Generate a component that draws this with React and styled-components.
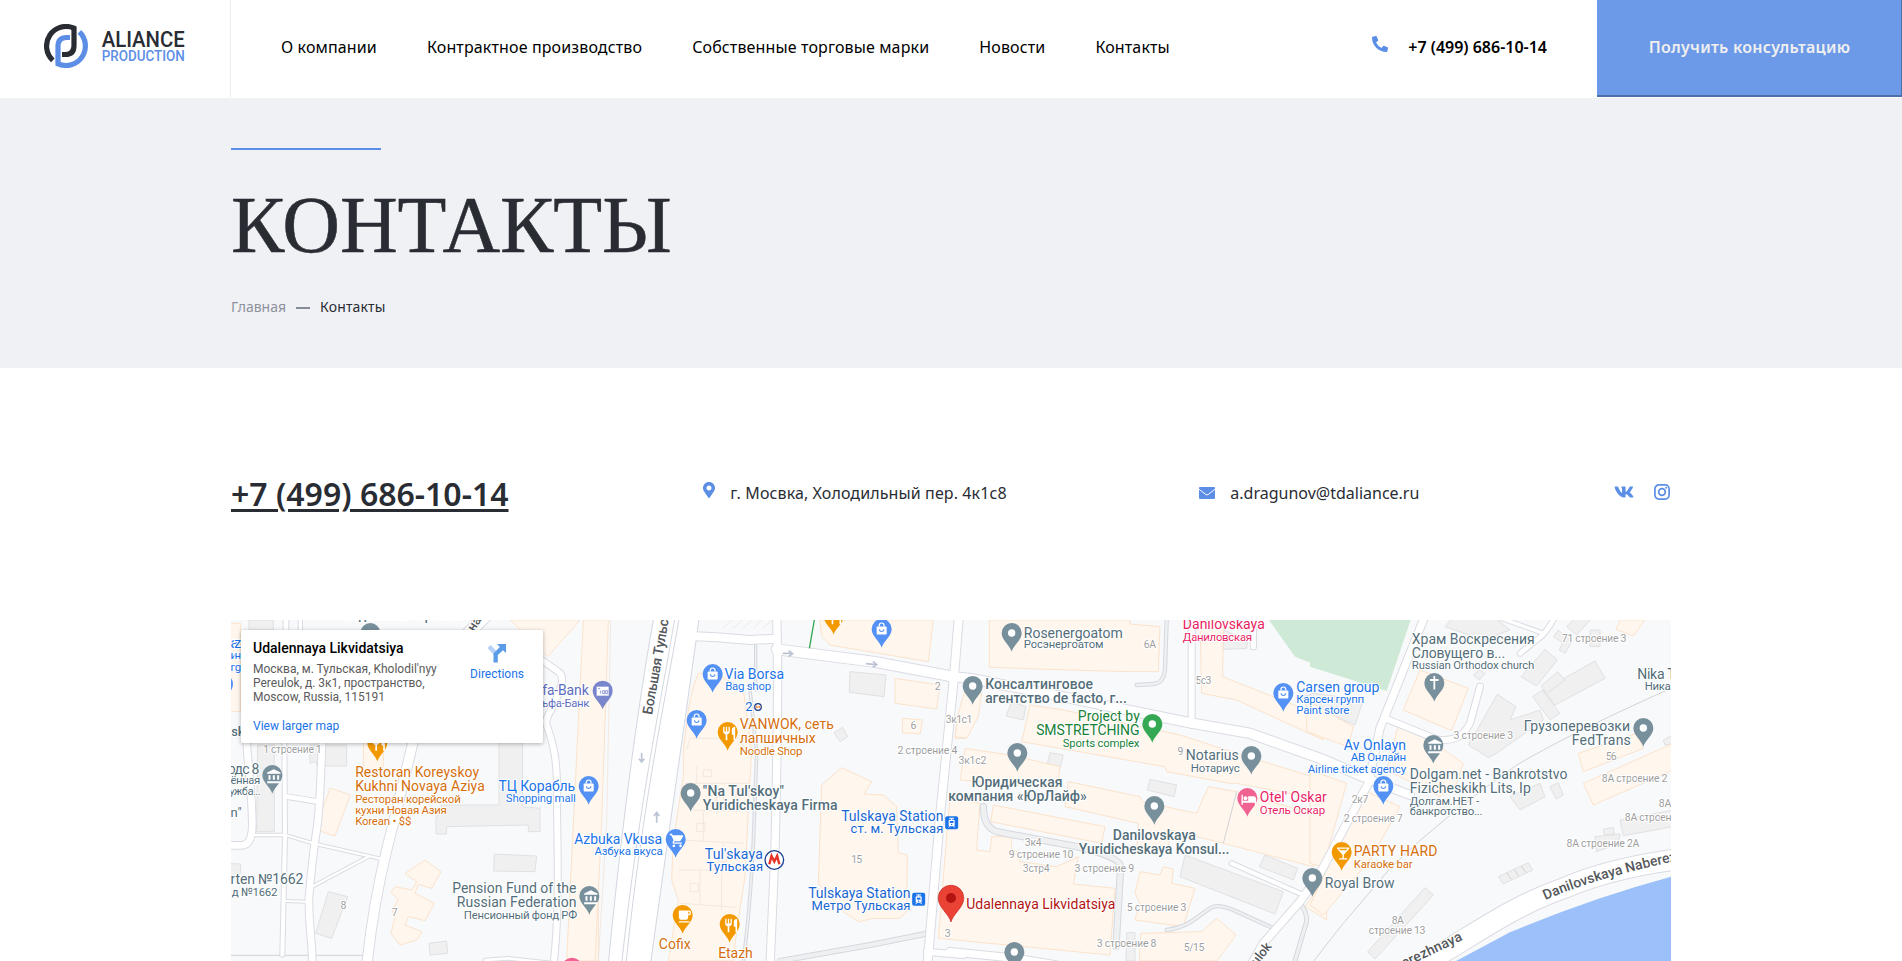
import React from "react";
import styled, { createGlobalStyle } from "styled-components";
import { FaPhoneAlt, FaMapMarkerAlt, FaVk } from "react-icons/fa";
import {
  MdRestaurant,
  MdAccountBalance,
  MdShoppingCart,
  MdLocalCafe,
  MdHotel,
  MdLocalBar,
} from "react-icons/md";

const GlobalStyle = createGlobalStyle`
  * { box-sizing: border-box; }
  body {
    margin: 0;
    background: #fff;
    color: #292c33;
    font-family: "Noto Sans", sans-serif;
    font-size: 16px;
  }
  a { color: inherit; text-decoration: none; }
  svg { display: block; }
`;

const blue = "#5c8ee6";

/* ---------- header ---------- */

const Header = styled.header`
  display: flex;
  height: 98px;
  padding-bottom: 1px;
  background: #fff;
`;

const LogoCell = styled.a`
  display: flex;
  width: 231px;
  padding: 24px 0 0 44px;
  border-right: 1px solid #ededf0;
`;

const Nav = styled.nav`
  display: flex;
  flex: 1;
  gap: 50px;
  padding: 36px 0 0 50px;
  line-height: 22px;
  letter-spacing: 0.135px;
  color: #000;
  white-space: nowrap;
`;

const HeaderPhone = styled.a`
  display: flex;
  gap: 20px;
  padding: 36px 50px 0 0;
  line-height: 22px;
  font-weight: 600;
  color: #000;

  svg { color: ${blue}; }
`;

const ConsultButton = styled.button`
  width: 305px;
  height: 97px;
  padding: 0 0 2px 1px;
  border: 0 solid #4d70a8;
  border-width: 0 1px 2px 0;
  background: #6d9ae8;
  color: #f0eff0;
  font: 600 16px "Noto Sans", sans-serif;
  letter-spacing: 0.27px;
`;

const LogoText = styled.text`
  font-family: Roboto, sans-serif;
  font-weight: 500;
  font-size: ${(p) => p.$size}px;
  fill: ${(p) => p.$fill};
`;

function Logo() {
  return (
    <svg width="146" height="46" viewBox="0 0 146 46">
      <g fill="none" strokeWidth="5.2">
        <path d="M8.8 36.3A19.5 19.5 0 0 1 30 4.2V21.5Q30 30.5 21.5 30.5H18" stroke="#292c33" />
        <path d="M35.4 7.9A19.5 19.5 0 0 1 14 39.8V22.5Q14 13.5 22.5 13.5H26" stroke={blue} />
      </g>
      <LogoText $size={22.5} $fill="#292c33" x="57.7" y="23" textLength="83" lengthAdjust="spacingAndGlyphs">
        ALIANCE
      </LogoText>
      <LogoText $size={15.5} $fill={blue} x="57.7" y="37" textLength="83" lengthAdjust="spacingAndGlyphs">
        PRODUCTION
      </LogoText>
    </svg>
  );
}

/* ---------- title band ---------- */

const Hero = styled.section`
  height: 270px;
  padding: 50px 231px 0;
  background: #f0f1f5;
`;

const Accent = styled.div`
  width: 150px;
  height: 2px;
  background: ${blue};
`;

const Title = styled.h1`
  margin: 29px 0 0;
  font: 400 80px/92px "Liberation Serif", serif;
  letter-spacing: -0.1px;
  -webkit-text-stroke: 0.5px #292c33;
  color: #292c33;
`;

const Breadcrumbs = styled.div`
  display: flex;
  align-items: center;
  gap: 10px;
  margin-top: 26px;
  font-size: 14px;
  line-height: 20px;
`;

const Crumb = styled.span`
  color: ${(p) => (p.$current ? "#292c33" : "#8d919c")};
  letter-spacing: ${(p) => (p.$current ? "0.15px" : "0")};
`;

const CrumbDash = styled.span`
  width: 14px;
  height: 2px;
  margin-top: 1px;
  background: #858b99;
`;

/* ---------- contacts ---------- */

const Content = styled.main`
  width: 1440px;
  margin: 0 auto;
  padding-top: 103px;
`;

const ContactRow = styled.div`
  display: flex;
  justify-content: space-between;
  height: 149px;
`;

const BigPhone = styled.a`
  padding-top: 1px;
  font-size: 32px;
  line-height: 44px;
  font-weight: 600;
  text-decoration: underline;
  text-decoration-thickness: 3px;
  text-underline-offset: 3px;
`;

const Contact = styled.a`
  display: flex;
  gap: ${(p) => p.$gap}px;
  padding-top: 11px;
  line-height: 22px;
  letter-spacing: ${(p) => p.$tracking || 0}px;
  svg {
    margin-top: ${(p) => p.$drop}px;
    color: ${blue};
  }
`;

const Socials = styled.div`
  display: flex;
  align-items: center;
  gap: 20px;
  height: 42px;
  padding: 0 1px 0 2px;
  color: ${blue};
`;

function Envelope() {
  return (
    <svg width="16" height="12" viewBox="0 0 16 12">
      <rect width="16" height="12" rx="1" fill={blue} />
      <path d="M0 2.2 L6.8 7.5 Q8 8.3 9.2 7.5 L16 2.2" fill="none" stroke="#fff" strokeWidth="1" />
    </svg>
  );
}

function Instagram() {
  return (
    <svg width="16" height="16" viewBox="0 0 16 16" fill="none" stroke={blue} strokeWidth="1.7">
      <rect x="0.9" y="0.9" width="14.2" height="14.2" rx="4" />
      <circle cx="8" cy="8" r="3.3" />
      <circle cx="12.2" cy="3.8" r="1" fill={blue} stroke="none" />
    </svg>
  );
}

/* ---------- map ---------- */

const MapFrame = styled.div`
  position: relative;
  height: 341px;
  overflow: hidden;
`;

const MapCard = styled.div`
  position: absolute;
  left: 10px;
  top: 10px;
  display: flex;
  justify-content: space-between;
  width: 302px;
  height: 113px;
  padding: 9px 19px 0 12px;
  border-radius: 2px;
  background: #fff;
  box-shadow: 0 1px 4px rgba(0, 0, 0, 0.3);
  font: 12px/14px Roboto, sans-serif;
  color: #5b5b5b;
  white-space: pre-line;
`;

const PlaceName = styled.div`
  margin-bottom: 5px;
  font-size: 14px;
  line-height: 18px;
  font-weight: 500;
  color: #000;
`;

const MapLink = styled.a`
  display: block;
  margin-top: ${(p) => p.$top}px;
  color: #1a73e8;
`;

const Directions = styled.div`
  display: flex;
  flex-direction: column;
  align-items: center;
  padding-top: 5px;

  svg { margin-right: 2px; }
`;

const MapText = styled.text`
  font-family: Roboto, sans-serif;
  font-size: ${(p) => p.$size}px;
  font-weight: ${(p) => p.$weight};
  fill: ${(p) => p.$fill};
  stroke: #fff;
  stroke-width: 2px;
  stroke-linejoin: round;
  paint-order: stroke;
`;

const slate = "#546e7a";
const poiBlue = "#1a73e8";
const transit = "#1967d2";
const orange = "#d56e0c";
const green = "#188038";
const pink = "#e91e63";
const gray = "#9e9e9e";

// Each sheet is drawn on a grid three times finer than the map, starting at x.
const SHEETS = [
  {
    x: 225,
    cream: [
      "856,30 968,140 1065,30",
      "1078,30 1120,30 1120,1053 1030,1053",
      "316,534 376,555 330,678 270,658",
      "415,395 475,395 475,470 415,490",
      "600,750 648,785 620,835 580,823 570,850 628,880 600,932 550,920 540,945 592,965 575,990 525,1005 498,970 510,920 500,900 520,870 498,845 510,830 560,840 575,815 540,790",
      "0,40 47,40 47,305 0,305",
    ],
    grey: [
      "98,405 148,405 148,665 95,665",
      "255,405 365,405 365,468 275,468 275,455 255,460",
      "822,390 893,390 893,590 945,595 945,665 910,665 910,645 665,650 665,672 633,672 633,625 650,585 822,585",
      "808,732 935,738 930,785 806,783",
      "310,845 368,860 320,985 272,970",
      "612,1000 665,993 668,1030 615,1035",
      "0,760 47,762 47,790 0,830",
      "72,30 145,30 145,60 72,60",
    ],
    roads: [
      [14, "M183,0V60"],
      [10, "M226,0V60"],
      [20, "M65,380C65,450 80,520 82,640Q82,705 50,706H0"],
      [12, "M178,380L180,680L172,1034"],
      [20, "M292,380C285,550 285,600 275,660C262,740 258,800 252,860C250,930 260,980 262,1053"],
      [28, "M568,380L515,600L485,720Q445,880 425,1070"],
      [7, "M90,675L180,675L265,700L475,748"],
      [14, "M188,560L280,575"],
      [7, "M258,832L430,740"],
      [6, "M180,873L245,875"],
      [34, "M800,0L730,70"],
      [18, "M950,150L1000,185Q1015,195 1010,220C990,300 955,320 965,345C985,400 1000,450 996,600C1000,800 1000,950 985,1070"],
      [8, "M780,1050L850,1045L985,1060"],
    ],
    paths: [],
    lines: ["M0,1036H415"],
  },
  {
    x: 590,
    cream: [
      "-20,30 55,30 35,640 15,1053 -70,1053",
      "325,190 380,190 460,240 485,420 475,600 465,800 440,960 430,1053 235,1053 265,870 245,810 250,690 280,500 280,420 295,300 310,230",
      "695,525 755,473 845,515 822,552 880,555 920,590 925,728 952,735 950,905 930,925 850,925 805,935 760,905 685,820",
      "690,30 1030,30 1015,155 720,105 695,80",
      "915,205 1050,225 1040,297 915,280",
      "937,325 998,330 990,372 937,368",
      "1100,335 1125,335 1125,385 1095,385",
    ],
    grey: [
      "780,185 888,195 882,260 778,247",
      "732,368 758,352 773,380 750,395",
      "360,410 380,410 378,450 358,450",
      "330,900 350,903 350,945 330,948",
    ],
    roads: [
      [24, "M300,78L380,82L480,90L560,86"],
      [22, "M560,0L562,130C565,300 560,500 555,720L540,1070"],
      [30, "M560,118L850,155L1090,200"],
      [24, "M1108,0L1092,200L1050,620L1012,1070"],
      [18, "M1010,1025L1120,1035"],
    ],
    paths: [
      [5, "M480,240L500,430L490,700Q480,900 460,1053"],
      [4, "M497,105V240"],
      [12, "M570,1053L840,1005L1005,972"],
    ],
    lines: [
      "M62,30L50,640L25,1053",
      "M400,55l25,-25M430,55l25,-25M460,55l25,-25M490,55l25,-25M520,55l25,-25",
      "M290,420l10,-35h150l15,40M285,520h190M300,600l150,4M270,690l190,10M265,780h190M320,470v50M380,520v90M340,605v90M400,700v80M330,780v100M395,790v110M270,880l170,12",
      "M340,480h25v20h-25zM375,560h25v25h-25zM320,640h25v25h-25zM385,730h25v25h-25zM300,820h25v25h-25z",
    ],
  },
  {
    x: 950,
    cream: [
      "118,30 540,30 540,42 630,50 625,185 530,185 360,180 205,175 118,172",
      "750,30 820,30 818,200 1120,320 1120,390 860,270 755,250",
      "240,285 340,300 690,375 860,430 1120,510 1120,570 860,520 840,520 650,485 645,470 215,395",
      "355,515 570,560 575,575 740,610 775,530 860,545 1120,620 1090,770 820,700 660,660 655,730 560,720 565,640 345,590",
      "45,415 180,435 330,470 322,535 30,510",
      "130,585 465,650 455,700 122,635",
      "45,240 95,250 85,320 50,385 15,380 25,310",
      "0,560 90,580 80,720 120,725 125,680 185,680 185,720 210,725 210,755 320,770 385,740 370,822 495,835 480,1035 -35,985",
      "640,770 670,778 665,820 735,835 700,950 555,930 570,880 555,850 570,785 630,795",
      "572,970 755,965 800,925 858,975 800,1053 568,1053",
      "1065,890 1100,840 1130,870 1130,930",
    ],
    grey: [
      "185,275 228,290 220,330 168,318",
      "300,428 340,435 330,475 292,462",
      "600,508 680,525 672,560 592,540",
      "705,735 1000,845 975,912 690,800",
      "945,735 1043,775 1030,810 928,770",
      "530,968 555,968 555,1053 528,1053",
      "820,60 893,90 890,115 820,118",
    ],
    park: "957,30 1125,30 1125,175 1035,140",
    roads: [
      [18, "M725,0V345"],
      [28, "M0,200L60,205L240,240L640,322L730,340L900,370L1110,445L1240,500"],
      [12, "M845,760L1060,855"],
      [16, "M910,60V110"],
      [22, "M0,1025L200,1045L320,1065"],
    ],
    paths: [
      [7, "M650,30L645,180Q640,220 610,222L560,225"],
      [16, "M100,590Q100,650 140,665L380,710Q510,740 512,770L498,1010"],
      [7, "M650,960C720,950 740,920 780,895Q800,880 850,900L970,955"],
      [9, "M1050,880Q1080,920 1065,950L1030,1070"],
    ],
    lines: ["M860,545L820,700"],
  },
  {
    x: 1310,
    cream: [
      "330,180 475,235 425,362 280,300",
      "265,345 325,370 345,380 460,460 440,520 390,560 230,480",
      "-10,270 130,350 115,410 -10,365",
      "0,480 110,520 40,770 0,760",
      "160,540 270,590 180,750 95,850 40,915 0,885 40,800",
      "805,430 980,370 1000,415 820,485",
      "820,520 1090,400 1090,480 850,585",
      "930,30 1005,30 970,78 918,58",
    ],
    grey: [
      "-20,260 10,250 160,270 135,345 100,330 0,290",
      "405,50 430,20 550,20 600,60 520,90",
      "705,118 742,150 680,228 633,200",
      "855,153 885,205 735,285 700,240",
      "743,185 765,210 710,250 693,228",
      "562,253 618,290 600,330 690,300 700,330 560,430 535,443 475,405",
      "600,560 690,520 705,560 630,600",
      "345,833 370,855 195,1047 173,1025",
      "930,630 1090,600 1090,650 940,677",
      "855,680 930,672 925,700 860,725",
      "770,50 800,20 850,20 800,75",
      "565,800 655,758 668,780 580,822",
      "697,240 668,260 720,330 750,310",
      "720,530 745,518 760,555 738,567",
      "880,658 910,652 913,672 883,675",
      "730,80 745,60 785,95 765,130 748,120 758,98",
      "490,195 508,180 525,190 508,210",
      "840,60 870,60 870,110 840,110",
      "1060,390 1090,375 1090,400 1065,405",
    ],
    park: "0,30 302,30 230,243 0,170",
    roads: [
      [22, "M352,0L210,355L175,520L30,790L-30,875L-140,1000L-180,1070"],
      [18, "M225,325L380,388Q450,400 480,340L510,230"],
      [14, "M630,130L680,90Q710,70 735,20"],
      [10, "M560,20L700,70"],
      [24, "M170,505L300,555"],
      [60, "M300,1085C480,985 600,890 760,835Q900,775 1100,748"],
    ],
    paths: [],
    lines: [
      "M0,1070Q20,1040 100,940L245,770Q400,620 620,465Q800,360 1090,232",
      "M590,788l14,20M612,778l14,20M634,768l14,20",
    ],
  },
];

const LABELS = [
  // [sheet, text, x, baseline, width, colour, size, weight]
  [0, "az", 18, 115, 30, poiBlue, 14],
  [0, "ин", 18, 148, 30, poiBlue, 11.5],
  [0, "ng", 18, 184, 30, poiBlue, 11.5],
  [0, "sk", 20, 377, 38, slate, 13, 500],
  [0, "fa-Bank", 953, 256, 138, "#5c6bc0", 14],
  [0, "ьфа-Банк", 953, 290, 140, "#5c6bc0", 11.5],
  [0, "1 строение 1", 116, 430, 174, gray, 10.5],
  [0, "одс 8", 10, 491, 93, slate, 14],
  [0, "ённая", 18, 523, 88, slate, 11.5],
  [0, "ужба...", 14, 556, 92, slate, 11.5],
  [0, 'n"', 18, 620, 32, slate, 13],
  [0, "Restoran Koreyskoy", 392, 501, 370, orange, 14],
  [0, "Kukhni Novaya Aziya", 392, 543, 387, orange, 14],
  [0, "Ресторан корейской", 392, 579, 315, orange, 11.5],
  [0, "кухни Новая Азия", 392, 611, 273, orange, 11.5],
  [0, "Korean • $$", 392, 644, 167, orange, 11.5],
  [0, "ТЦ Корабль", 822, 543, 228, poiBlue, 14],
  [0, "Shopping mall", 844, 576, 208, poiBlue, 11.5],
  [0, "rten №1662", 18, 822, 217, slate, 14],
  [0, "д №1662", 22, 857, 135, slate, 11.5],
  [0, "8", 348, 898, 16, gray, 10.5],
  [0, "7", 502, 918, 15, gray, 10.5],
  [0, "Pension Fund of the", 683, 849, 371, slate, 14],
  [0, "Russian Federation", 697, 891, 357, slate, 14],
  [0, "Пенсионный фонд РФ", 718, 926, 338, slate, 11.5],
  [1, "Azbuka Vkusa", -46, 701, 262, poiBlue, 14],
  [1, "Азбука вкуса", 15, 735, 203, poiBlue, 11.5],
  [1, "Via Borsa", 405, 206, 177, poiBlue, 14],
  [1, "Bag shop", 407, 239, 136, poiBlue, 11.5],
  [1, "2", 467, 303, 20, transit, 13],
  [1, "VANWOK, сеть", 451, 357, 280, orange, 14],
  [1, "лапшичных", 451, 399, 226, orange, 14],
  [1, "Noodle Shop", 451, 434, 186, orange, 11.5],
  [1, "\"Na Tul'skoy\"", 340, 558, 242, slate, 14, 500],
  [1, "Yuridicheskaya Firma", 340, 600, 402, slate, 14, 500],
  [1, "Tul'skaya", 346, 747, 172, transit, 14],
  [1, "Тульская", 351, 783, 168, transit, 13],
  [1, "Tulskaya Station", 755, 632, 305, transit, 14],
  [1, "ст. м. Тульская", 783, 669, 277, transit, 13],
  [1, "Tulskaya Station", 656, 863, 305, transit, 14],
  [1, "Метро Тульская", 666, 900, 295, transit, 13],
  [1, "Cofix", 208, 1016, 94, orange, 14],
  [1, "Etazh", 386, 1043, 102, orange, 14],
  [1, "2", 1036, 240, 15, gray, 10.5],
  [1, "6", 963, 357, 15, gray, 10.5],
  [1, "3к1с1", 1069, 339, 78, gray, 10.5],
  [1, "2 строение 4", 924, 433, 178, gray, 10.5],
  [1, "15", 785, 759, 31, gray, 10.5],
  [1, "3", 1066, 980, 15, gray, 10.5],
  [2, "Rosenergoatom", 223, 84, 295, slate, 14],
  [2, "Росэнергоатом", 223, 115, 237, slate, 11.5],
  [2, "6A", 583, 114, 35, gray, 10.5],
  [2, "Danilovskaya", 700, 57, 244, pink, 14],
  [2, "Даниловская", 700, 92, 206, pink, 11.5],
  [2, "5с3", 738, 222, 46, gray, 10.5],
  [2, "Консалтинговое", 107, 236, 322, slate, 14, 500],
  [2, "агентство de facto, г...", 107, 278, 423, slate, 14, 500],
  [2, "Project by", 385, 333, 184, green, 14],
  [2, "SMSTRETCHING", 260, 375, 308, green, 14],
  [2, "Sports complex", 340, 410, 228, green, 11.5],
  [2, "9", 684, 436, 16, gray, 10.5],
  [2, "Notarius", 709, 449, 157, slate, 14],
  [2, "Нотариус", 724, 485, 145, slate, 11.5],
  [2, "3к1с2", 27, 463, 82, gray, 10.5],
  [2, "Юридическая", 66, 531, 271, slate, 14, 500],
  [2, "компания «ЮрЛайф»", -4, 573, 414, slate, 14, 500],
  [2, "Danilovskaya", 490, 690, 247, slate, 14, 500],
  [2, "Yuridicheskaya Konsul...", 388, 732, 450, slate, 14, 500],
  [2, "Otel' Oskar", 931, 576, 199, pink, 14],
  [2, "Отель Оскар", 931, 611, 194, pink, 11.5],
  [2, "3к4", 226, 708, 49, gray, 10.5],
  [2, "9 строение 10", 178, 745, 192, gray, 10.5],
  [2, "3стр4", 220, 787, 79, gray, 10.5],
  [2, "3 строение 9", 375, 787, 177, gray, 10.5],
  [2, "Udalennaya Likvidatsiya", 50, 897, 446, "#b31412", 14],
  [2, "5 строение 3", 532, 903, 177, gray, 10.5],
  [2, "3 строение 8", 442, 1011, 177, gray, 10.5],
  [2, "5/15", 703, 1023, 60, gray, 10.5],
  [2, "Carsen group", 1040, 245, 248, poiBlue, 14],
  [2, "Карсен групп", 1040, 280, 202, poiBlue, 11.5],
  [2, "Paint store", 1040, 313, 158, poiBlue, 11.5],
  [3, "Храм Воскресения", 307, 102, 367, slate, 14],
  [3, "Словущего в...", 307, 144, 278, slate, 14],
  [3, "Russian Orthodox church", 307, 176, 366, slate, 11.5],
  [3, "71 строение 3", 757, 97, 192, gray, 10.5],
  [3, "Nika Trans", 983, 206, 190, slate, 14],
  [3, "Ника Транс", 1006, 240, 170, slate, 11.5],
  [3, "3 строение 3", 432, 388, 177, gray, 10.5],
  [3, "Грузоперевозки", 643, 363, 317, slate, 14],
  [3, "FedTrans", 787, 405, 175, slate, 14],
  [3, "56", 889, 450, 31, gray, 10.5],
  [3, "8А строение 2", 877, 517, 195, gray, 10.5],
  [3, "8А", 1048, 591, 36, gray, 10.5],
  [3, "8А строение 3", 946, 634, 195, gray, 10.5],
  [3, "8А строение 2А", 771, 711, 217, gray, 10.5],
  [3, "Av Onlayn", 103, 420, 185, poiBlue, 14],
  [3, "АВ Онлайн", 124, 454, 164, poiBlue, 11.5],
  [3, "Airline ticket agency", -5, 488, 293, poiBlue, 11.5],
  [3, "Dolgam.net - Bankrotstvo", 301, 507, 471, slate, 14],
  [3, "Fizicheskikh Lits, Ip", 301, 549, 361, slate, 14],
  [3, "Долгам.НЕТ -", 301, 584, 206, slate, 11.5],
  [3, "банкротство...", 301, 616, 216, slate, 11.5],
  [3, "2к7", 127, 579, 48, gray, 10.5],
  [3, "2 строение 7", 103, 637, 175, gray, 10.5],
  [3, "PARTY HARD", 133, 737, 249, orange, 14],
  [3, "Karaoke bar", 133, 773, 175, orange, 11.5],
  [3, "Royal Brow", 46, 833, 207, slate, 14],
  [3, "8А", 247, 943, 34, gray, 10.5],
  [3, "строение 13", 178, 972, 168, gray, 10.5],
];

const PINS = [
  // [sheet, x, y, colour, icon]
  [0, 436, 69, "#78909c"],
  [0, 457, 398, "#f29900", MdRestaurant],
  [0, 142, 495, "#78909c", MdAccountBalance],
  [0, -6, 222, "#5491f5"],
  [0, 1091, 528, "#5491f5", "bag"],
  [0, 1093, 858, "#78909c", MdAccountBalance],
  [0, 1041, 1073, "#f06292"],
  [1, 38, 242, "#7986cb", "note"],
  [1, 368, 192, "#5491f5", "bag"],
  [1, 320, 330, "#5491f5", "bag"],
  [1, 413, 366, "#f29900", MdRestaurant],
  [1, 302, 549, "#78909c", "dot"],
  [1, 257, 687, "#5491f5", MdShoppingCart],
  [1, 278, 915, "#f29900", MdLocalCafe],
  [1, 419, 942, "#f29900", MdRestaurant],
  [1, 731, 18, "#f29900", MdRestaurant],
  [1, 875, 57, "#5491f5", "bag"],
  [2, 185, 69, "#78909c", "dot"],
  [2, 68, 228, "#78909c", "dot"],
  [2, 607, 342, "#34a853", "dot"],
  [2, 202, 429, "#78909c", "dot"],
  [2, 904, 438, "#78909c", "dot"],
  [2, 613, 588, "#78909c", "dot"],
  [2, 892, 564, "#f06292", MdHotel],
  [2, 1000, 249, "#5491f5", "bag"],
  [2, 1087, 804, "#78909c", "dot"],
  [2, 193, 1026, "#78909c", "dot"],
  [3, 373, 219, "#78909c", "cross"],
  [3, 370, 405, "#78909c", MdAccountBalance],
  [3, 220, 528, "#5491f5", "bag"],
  [3, 95, 726, "#f29900", MdLocalBar],
  [3, 1000, 354, "#78909c", "dot"],
];

const px = (sheet, x) => SHEETS[sheet].x + x / 3;
const py = (y) => 610 + y / 3;
const PIN_SHAPE = "M0,18.7C-1.5,12.5 -10,7.5 -10,0A10,10 0 1 1 10,0C10,7.5 1.5,12.5 0,18.7Z";

function Pin({ sheet, x, y, fill, icon: Icon }) {
  return (
    <g transform={`translate(${px(sheet, x)} ${py(y)})`}>
      <path d={PIN_SHAPE} fill={fill} />
      {Icon === "dot" && <circle r="3.7" fill="#fff" />}
      {Icon === "cross" && <path d="M0,-7V6.5M-4.3,-3H4.3" stroke="#fff" strokeWidth="1.8" />}
      {Icon === "bag" && (
        <g>
          <rect x="-5" y="-2.5" width="10" height="8" rx="0.8" fill="#fff" />
          <path d="M-2.4,-2.5V-3.6A2.4,2.4 0 0 1 2.4,-3.6V-2.5" fill="none" stroke="#fff" strokeWidth="1.2" />
          <path d="M-2.2,0.3A2.2,2.2 0 0 0 2.2,0.3" fill="none" stroke={fill} strokeWidth="1.1" />
        </g>
      )}
      {Icon === "note" && (
        <g>
          <rect x="-6" y="-4" width="12" height="9" fill="#fff" />
          <path d="M-4.5,-2h2M-2,0v3M0,0h2v3h-2zM3,0h2v3h-2z" stroke={fill} fill="none" strokeWidth="0.8" />
        </g>
      )}
      {typeof Icon === "function" && <Icon x="-6.5" y="-6.5" width="13" height="13" color="#fff" />}
    </g>
  );
}

function Sheet({ sheet, children }) {
  return <g transform={`translate(${sheet.x} 610) scale(${1 / 3})`}>{children}</g>;
}

function Lane({ strokes, extra, color }) {
  return strokes.map(([w, d]) => (
    <path key={d} d={d} fill="none" stroke={color} strokeWidth={w + extra} strokeLinecap="round" strokeLinejoin="round" />
  ));
}

function Tram({ x, y }) {
  return (
    <g transform={`translate(${px(1, x)} ${py(y)})`}>
      <rect x="-6.5" y="-6.5" width="13" height="13" rx="2" fill="#1a73e8" />
      <path d="M-2.4,-4.4H2.4M0,-4.4V-2.5" stroke="#fff" strokeWidth="1" />
      <rect x="-3" y="-3" width="6" height="6.5" rx="1" fill="#fff" />
      <rect x="-1.8" y="-1.7" width="3.6" height="2" fill="#1a73e8" />
      <circle cy="1.9" r="0.7" fill="#1a73e8" />
      <path d="M-2,3.5L-3,4.8M2,3.5L3,4.8" stroke="#fff" strokeWidth="1" />
    </g>
  );
}

function MapDrawing() {
  return (
    <svg width="1440" height="341" viewBox="231 620 1440 341">
      <rect x="231" y="620" width="1440" height="341" fill="#f8f9fb" />
      {SHEETS.map((s) => (
        <Sheet key={s.x} sheet={s}>
          {s.park && <polygon points={s.park} fill="#ceead6" />}
          {s.grey.map((p) => (
            <polygon key={p} points={p} fill="#f0f0f1" stroke="#e0e1e3" strokeWidth="3" />
          ))}
          {s.cream.map((p) => (
            <polygon key={p} points={p} fill="#fff6ee" stroke="#fbe3cb" strokeWidth="3" />
          ))}
          {s.lines.map((d) => (
            <path key={d} d={d} fill="none" stroke={s.x === 590 ? "#efe4dc" : "#c9cbd0"} strokeWidth="2.5" />
          ))}
          <Lane strokes={s.paths} extra={6} color="#d5d8de" />
          <Lane strokes={s.paths} extra={0} color="#eef0f2" />
        </Sheet>
      ))}
      {SHEETS.map((s) => (
        <Sheet key={s.x} sheet={s}>
          <Lane strokes={s.roads} extra={6} color="#dadce3" />
        </Sheet>
      ))}
      <Sheet sheet={SHEETS[1]}>
        <path
          d="M192,20C150,250 100,600 55,1060H182C210,850 290,300 328,20Z"
          fill="#fff"
          stroke="#d3d7e0"
          strokeWidth="3"
        />
        <path d="M268,20C230,250 160,560 108,1060M255,20C218,250 150,560 95,1060" fill="none" stroke="#d3d7e0" strokeWidth="3" />
        <path d="M673,30L657,122" stroke="#34a853" strokeWidth="4" />
      </Sheet>
      {SHEETS.map((s) => (
        <Sheet key={s.x} sheet={s}>
          <Lane strokes={s.roads} extra={0} color="#fff" />
        </Sheet>
      ))}
      <Sheet sheet={SHEETS[1]}>
        <g fill="none" stroke="#bcc3d4" strokeWidth="5">
          <path d="M155,428V455M147,446L155,456L163,446" />
          <path d="M200,638V608M192,618L200,607L208,618" />
          <path d="M578,130H606M596,122L608,131L596,139" />
          <path d="M828,161L858,164M849,154L860,164L848,172" />
        </g>
      </Sheet>
      <Sheet sheet={SHEETS[3]}>
        <path d="M425,1060L600,967Q840,865 1090,798V1060Z" fill="#9cc0f9" />
      </Sheet>
      <defs>
        <path id="embankment" d="M1545.5,900Q1605,873 1740,848" />
        <path id="embankmentWest" d="M1381,979L1480,931.5" />
        <path id="tulskaya" d="M652,715Q662,660 674,590" />
      </defs>
      {PINS.map(([sheet, x, y, fill, icon]) => (
        <Pin key={`${sheet}-${x}-${y}`} sheet={sheet} x={x} y={y} fill={fill} icon={icon} />
      ))}
      <Tram x={1085} y={638} />
      <Tram x={986} y={868} />
      <g transform={`translate(${px(1, 553)} ${py(750)})`}>
        <circle r="9.3" fill="#fff" stroke="#1a3f94" strokeWidth="1.3" />
        <path d="M-5,4.3L-2.8,-4L0,1.6L2.8,-4L5,4.3" fill="none" stroke="#e53528" strokeWidth="2.4" />
      </g>
      <g transform={`translate(${px(1, 504)} ${py(291)})`}>
        <circle r="3.3" fill="#fff" stroke="#1a3f94" strokeWidth="1.2" />
        <path d="M-1.8,1.2V-1.2L0,0.6L1.8,-1.2V1.2" fill="none" stroke="#f2711c" strokeWidth="1" />
      </g>
      <g transform={`translate(${px(1, 1083)} ${py(864)})`}>
        <path d={PIN_SHAPE} transform="scale(1.28)" fill="#ea4335" stroke="#c5221f" strokeWidth="0.5" />
        <circle r="5" fill="#b31412" />
      </g>
      {LABELS.map(([sheet, text, x, y, w, fill, size, weight]) => (
        <MapText
          key={`${sheet}-${x}-${y}`}
          x={px(sheet, x) - 0.5}
          y={py(y)}
          textLength={w / 3 + 0.6}
          $fill={fill}
          $size={size}
          $weight={weight || 400}
        >
          {text}
        </MapText>
      ))}
      <MapText $fill="#55585c" $size={14} $weight={500}>
        <textPath href="#embankment" textLength="175">Danilovskaya Naberezhnaya</textPath>
      </MapText>
      <MapText $fill="#55585c" $size={14} $weight={500}>
        <textPath href="#embankmentWest" textLength="91">Naberezhnaya</textPath>
      </MapText>
      <MapText $fill="#55585c" $size={14} $weight={500}>
        <textPath href="#tulskaya" textLength="119">Большая Тульская</textPath>
      </MapText>
      <MapText $fill="#55585c" $size={13} $weight={500} transform="translate(1257 966) rotate(-52)">
        ulok
      </MapText>
      <MapText $fill="#55585c" $size={13} $weight={500} transform="translate(474 632) rotate(-58)">
        ная
      </MapText>
      <MapText $fill={slate} $size={12} $weight={500} x="345" y="620.4">
        Ходынская Торговля
      </MapText>
    </svg>
  );
}

function DirectionsIcon() {
  return (
    <svg width="19" height="19" viewBox="0 0 19 19">
      <path d="M0.5 4L3.5 1L10 7.5L7 11Z" fill="#b5d1f8" />
      <path d="M10 0H19V9L16 6.2L10.8 11V18.5H6.5V9.5L12.8 3Z" fill="#5b9be8" />
    </svg>
  );
}

const NAV_ITEMS = ["О компании", "Контрактное производство", "Собственные торговые марки", "Новости", "Контакты"];

export default function App() {
  return (
    <>
      <GlobalStyle />
      <Header>
        <LogoCell href="#">
          <Logo />
        </LogoCell>
        <Nav>
          {NAV_ITEMS.map((item) => (
            <a key={item} href="#">{item}</a>
          ))}
        </Nav>
        <HeaderPhone href="#">
          <FaPhoneAlt size={16} />
          +7 (499) 686-10-14
        </HeaderPhone>
        <ConsultButton>Получить консультацию</ConsultButton>
      </Header>
      <Hero>
        <Accent />
        <Title>КОНТАКТЫ</Title>
        <Breadcrumbs>
          <Crumb>Главная</Crumb>
          <CrumbDash />
          <Crumb $current>Контакты</Crumb>
        </Breadcrumbs>
      </Hero>
      <Content>
        <ContactRow>
          <BigPhone href="#">+7 (499) 686-10-14</BigPhone>
          <Contact href="#" $gap={13} $drop={0} $tracking={0.11}>
            <FaMapMarkerAlt size={16} />
            г. Мосвка, Холодильный пер. 4к1с8
          </Contact>
          <Contact href="#" $gap={15} $drop={5}>
            <Envelope />
            a.dragunov@tdaliance.ru
          </Contact>
          <Socials>
            <FaVk size={20} />
            <Instagram />
          </Socials>
        </ContactRow>
        <MapFrame>
          <MapDrawing />
          <MapCard>
            <div>
              <PlaceName>Udalennaya Likvidatsiya</PlaceName>
              {"Москва, м. Тульская, Kholodil'nyy\nPereulok, д. 3к1, пространство,\nMoscow, Russia, 115191"}
              <MapLink href="#" $top={15}>View larger map</MapLink>
            </div>
            <Directions>
              <DirectionsIcon />
              <MapLink href="#" $top={4}>Directions</MapLink>
            </Directions>
          </MapCard>
        </MapFrame>
      </Content>
    </>
  );
}
